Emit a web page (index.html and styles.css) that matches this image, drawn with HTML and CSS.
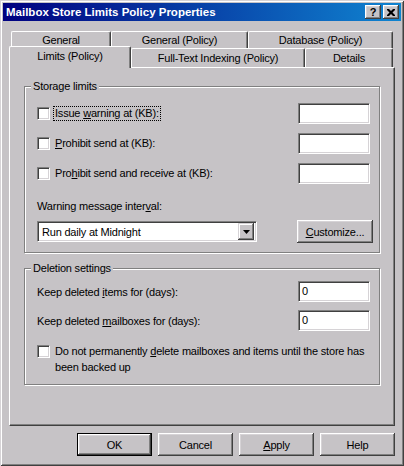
FILE: index.html
```html
<!DOCTYPE html>
<html lang="en">
<head>
    <meta charset="UTF-8">
    <title>Mailbox Store Limits Policy Properties</title>
    <link rel="stylesheet" href="styles.css">
</head>
<body>

    <div class="window">
        <div class="titlebar">
            <span class="title">Mailbox Store Limits Policy Properties</span>
            <div class="caption-btns">
                <span class="cap-btn help">?</span>
                <span class="cap-btn">
                    <svg width="8" height="7" viewBox="0 0 8 7"><path d="M0 0h2l2 2 2-2h2v1l-2.5 2.5 2.5 2.5v1h-2l-2-2-2 2h-2v-1l2.5-2.5-2.5-2.5z" fill="#000"/></svg>
                </span>
            </div>
        </div>

        <div class="dialog">
            <div class="tabrow back">
                <div class="tab tab-general">General</div>
                <div class="tab tab-gpolicy">General (Policy)</div>
                <div class="tab tab-database">Database (Policy)</div>
            </div>
            <div class="tabrow front">
                <div class="tab tab-limits selected">Limits (Policy)</div>
                <div class="tab tab-fulltext">Full-Text Indexing (Policy)</div>
                <div class="tab tab-details">Details</div>
            </div>

            <div class="panel">
                <div class="group storage">
                    <span class="group-title">Storage limits</span>
                    <div class="row">
                        <div class="check"><span class="box"></span><span class="label focus">Issue <u>w</u>arning at (KB):</span></div>
                        <span class="field"></span>
                    </div>
                    <div class="row">
                        <div class="check"><span class="box"></span><span class="label"><u>P</u>rohibit send at (KB):</span></div>
                        <span class="field"></span>
                    </div>
                    <div class="row">
                        <div class="check"><span class="box"></span><span class="label">Pro<u>h</u>ibit send and receive at (KB):</span></div>
                        <span class="field"></span>
                    </div>
                    <div class="interval-label">Warning message inter<u>v</u>al:</div>
                    <div class="combo-row">
                        <div class="combo">
                            <span class="combo-text">Run daily at Midnight</span>
                            <span class="combo-btn">
                                <svg width="7" height="4" viewBox="0 0 7 4"><path d="M0 0h7l-3.5 4z" fill="#000"/></svg>
                            </span>
                        </div>
                        <span class="btn customize"><u>C</u>ustomize...</span>
                    </div>
                </div>

                <div class="group deletion">
                    <span class="group-title">Deletion settings</span>
                    <div class="drow">
                        <span>Keep deleted <u>i</u>tems for (days):</span>
                        <span class="field">0</span>
                    </div>
                    <div class="drow">
                        <span>Keep deleted <u>m</u>ailboxes for (days):</span>
                        <span class="field">0</span>
                    </div>
                    <div class="check-row">
                        <span class="box"></span>
                        <span class="label wrap">Do not permanently <u>d</u>elete mailboxes and items until the store has<br>been backed up</span>
                    </div>
                </div>
            </div>

            <div class="buttons">
                <span class="btn default">OK</span>
                <span class="btn">Cancel</span>
                <span class="btn"><u>A</u>pply</span>
                <span class="btn">Help</span>
            </div>
        </div>
    </div>

</body>
</html>
```

FILE: styles.css
```css
/* Reset */
* {
    margin: 0;
    padding: 0;
    box-sizing: border-box;
}

body {
    font-family: 'Liberation Sans', Arial, sans-serif;
    font-size: 11px;
    letter-spacing: -0.2px;
    color: #000;
    background-color: #c6c3c6;
}

u {
    text-decoration: underline;
    text-underline-offset: 1px;
}

/* Janela */
.window {
    width: 404px;
    height: 466px;
    padding: 3px;
    background-color: #c6c3c6;
    box-shadow: inset 1px 1px #d6d3d6, inset -1px -1px #404040, inset 2px 2px #fff, inset -2px -2px #808080;
    display: flex;
    flex-direction: column;
}

.titlebar {
    height: 18px;
    display: flex;
    align-items: center;
    justify-content: space-between;
    padding: 0 2px 0 3px;
    background: linear-gradient(to right, #000080, #1084d0);
    color: #fff;
}

.title {
    font-weight: bold;
    font-size: 11.5px;
    letter-spacing: 0;
}

.caption-btns {
    display: flex;
    gap: 2px;
}

.cap-btn {
    width: 16px;
    height: 14px;
    display: flex;
    align-items: center;
    justify-content: center;
    background-color: #c6c3c6;
    color: #000;
    font-weight: bold;
    font-size: 11px;
    box-shadow: inset -1px -1px #404040, inset 1px 1px #fff, inset -2px -2px #808080, inset 2px 2px #d6d3d6;
}

.dialog {
    flex: 1;
    display: flex;
    flex-direction: column;
    padding: 10px 6px 0 6px;
}

/* Abas */
.tabrow {
    display: flex;
}

.tabrow.back {
    margin-left: 2px;
    height: 17px;
}

.tabrow.front {
    height: 19px;
}

.tab {
    border-top: 1px solid #fff;
    border-left: 1px solid #fff;
    border-right: 1px solid #404040;
    border-radius: 2px 2px 0 0;
    box-shadow: inset -1px 0 #808080;
    text-align: center;
    line-height: 16px;
    background-color: #c6c3c6;
}

.tabrow.front .tab {
    line-height: 19px;
}

.tab-general { width: 100px; }
.tab-gpolicy { width: 137px; }
.tab-database { width: 145px; }
.tab-limits { width: 122px; }
.tab-fulltext { width: 174px; }
.tab-details { width: 88px; }

.tab.selected {
    height: 22px;
    margin-top: -2px;
    margin-bottom: -1px;
    position: relative;
    z-index: 1;
    line-height: 19px;
}

/* Painel */
.panel {
    height: 359px;
    border: 1px solid;
    border-color: #fff #404040 #404040 #fff;
    box-shadow: inset -1px -1px #808080;
    padding: 18px 14px 0 14px;
}

.group {
    position: relative;
    border: 1px solid #808080;
    box-shadow: inset 1px 1px #fff, 1px 1px #fff;
}

.group-title {
    position: absolute;
    top: -8px;
    left: 6px;
    padding: 0 2px;
    line-height: 14px;
    background-color: #c6c3c6;
}

.storage {
    padding: 16px 9px 9px 12px;
}

.row {
    display: flex;
    align-items: center;
    justify-content: space-between;
    height: 21px;
}

.row + .row {
    margin-top: 9px;
}

.check {
    display: flex;
    align-items: center;
}

.box {
    width: 13px;
    height: 13px;
    flex-shrink: 0;
    background-color: #fff;
    border: 1px solid;
    border-color: #808080 #fff #fff #808080;
    box-shadow: inset 1px 1px #404040, inset -1px -1px #d6d3d6;
    margin-right: 4px;
}

.label {
    padding: 0 1px;
    line-height: 13px;
    white-space: nowrap;
}

.focus {
    outline: 1px dotted #000;
}

.field {
    width: 72px;
    height: 21px;
    background-color: #fff;
    border: 1px solid;
    border-color: #808080 #fff #fff #808080;
    box-shadow: inset 1px 1px #404040, inset -1px -1px #d6d3d6;
    padding: 0 3px;
    line-height: 19px;
}

.interval-label {
    margin-top: 16px;
    line-height: 13px;
}

.combo-row {
    margin-top: 7px;
    height: 23px;
    display: flex;
    align-items: center;
    justify-content: space-between;
}

.combo {
    width: 220px;
    height: 21px;
    display: flex;
    align-items: center;
    padding: 2px;
    background-color: #fff;
    border: 1px solid;
    border-color: #808080 #fff #fff #808080;
    box-shadow: inset 1px 1px #404040, inset -1px -1px #d6d3d6;
}

.combo-text {
    padding-left: 2px;
}

.combo-btn {
    margin-left: auto;
    width: 16px;
    height: 17px;
    display: flex;
    align-items: center;
    justify-content: center;
    background-color: #c6c3c6;
    box-shadow: inset -1px -1px #404040, inset 1px 1px #d6d3d6, inset -2px -2px #808080, inset 2px 2px #fff;
}

/* Botões */
.btn {
    width: 75px;
    height: 23px;
    display: flex;
    align-items: center;
    justify-content: center;
    background-color: #c6c3c6;
    box-shadow: inset -1px -1px #404040, inset 1px 1px #fff, inset -2px -2px #808080, inset 2px 2px #d6d3d6;
}

.btn.customize {
    width: 76px;
    margin-right: -3px;
}

.btn.default {
    border: 1px solid #000;
}

.deletion {
    margin-top: 15px;
    padding: 12px 9px 9px 12px;
}

.drow {
    display: flex;
    align-items: center;
    justify-content: space-between;
    height: 21px;
}

.drow + .drow {
    margin-top: 8px;
}

.check-row {
    margin-top: 13px;
    display: flex;
    align-items: flex-start;
}

.check-row .box {
    margin-top: 1px;
}

.check-row .label {
    line-height: 16px;
    margin-top: -1px;
}

.buttons {
    display: flex;
    justify-content: flex-end;
    gap: 6px;
    margin-top: 7px;
}
```
